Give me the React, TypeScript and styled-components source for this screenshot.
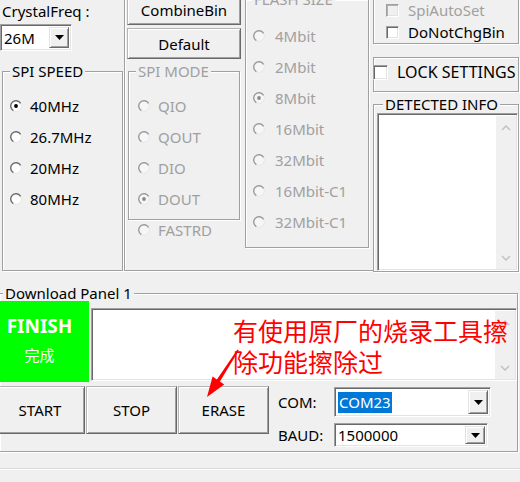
import React from 'react';
import styled, { createGlobalStyle } from 'styled-components';

const GlobalStyle = createGlobalStyle`
  html, body { margin: 0; padding: 0; background: #f0f0f0; }
  body {
    font-family: "Noto Sans", "Noto Sans CJK SC", sans-serif;
    font-size: 15px;
    color: #000;
  }
  * { box-sizing: border-box; }
`;

const DISABLED = '#a0a0a0';

const Window = styled.div`
  position: relative;
  width: 520px;
  height: 482px;
  overflow: hidden;
  display: flex;
  flex-direction: column;
  background: #f0f0f0;
`;

const TopArea = styled.div`
  display: flex;
  align-items: flex-start;
  height: 272px;
  flex-shrink: 0;
`;

const LeftCol = styled.div`
  width: 124px;
  flex-shrink: 0;
  display: flex;
  flex-direction: column;
  align-items: flex-start;
`;

const FieldLabel = styled.div`
  height: 22px;
  line-height: 22px;
  padding-left: 2px;
  white-space: nowrap;
`;

const Group = styled.fieldset<{ $w: number; $h: number; $mt?: number; $ml?: number }>`
  margin: ${p => p.$mt ?? 0}px 0 0 ${p => p.$ml ?? 0}px;
  padding: 0;
  min-width: 0;
  width: ${p => p.$w}px;
  height: ${p => p.$h}px;
  border: 1px solid #a0a0a0;
  box-shadow: 1px 1px 0 #fff, inset 1px 1px 0 #fff;
  flex-shrink: 0;
`;

const Legend = styled.legend<{ $ml: number; $disabled?: boolean }>`
  margin-left: ${p => p.$ml}px;
  padding: 0 2px;
  height: 18px;
  line-height: 18px;
  background: #f0f0f0;
  color: ${p => (p.$disabled ? DISABLED : '#000')};
  white-space: nowrap;
`;

const OptionList = styled.div<{ $pt: number; $pl: number }>`
  display: flex;
  flex-direction: column;
  padding: ${p => p.$pt}px 0 0 ${p => p.$pl}px;
`;

const Option = styled.div<{ $disabled?: boolean; $gap?: number; $h?: number; $ml?: number }>`
  display: flex;
  align-items: center;
  height: ${p => p.$h ?? 31}px;
  gap: ${p => p.$gap ?? 8}px;
  margin-left: ${p => p.$ml ?? 0}px;
  color: ${p => (p.$disabled ? DISABLED : '#000')};
  white-space: nowrap;
`;

const RadioSvg = styled.svg`
  display: block;
  flex-shrink: 0;
`;

function Radio({ checked, disabled }: { checked?: boolean; disabled?: boolean }) {
  return (
    <RadioSvg width="12" height="12" viewBox="0 0 12 12">
      <circle cx="6" cy="6" r="5.4" fill={disabled ? '#f6f6f6' : '#fff'} stroke="#e6e6e6" strokeWidth="1" />
      <path
        d="M10.6 3.35 A5.3 5.3 0 1 0 3.35 10.6"
        fill="none"
        stroke={disabled ? '#9c9c9c' : '#6e6e6e'}
        strokeWidth="1.4"
      />
      {checked && <circle cx="6" cy="6" r="1.9" fill={disabled ? '#8a8a8a' : '#000'} />}
    </RadioSvg>
  );
}

const CheckBox = styled.span<{ $size?: number; $disabled?: boolean; $ml?: number }>`
  display: inline-block;
  flex-shrink: 0;
  width: ${p => p.$size ?? 13}px;
  height: ${p => p.$size ?? 13}px;
  margin-left: ${p => p.$ml ?? 0}px;
  background: ${p => (p.$disabled ? '#f0f0f0' : '#fff')};
  border: 1px solid;
  border-color: #a0a0a0 #fff #fff #a0a0a0;
  box-shadow: inset 1px 1px 0 ${p => (p.$disabled ? '#b0b0b0' : '#696969')}, inset -1px -1px 0 #e3e3e3;
`;

const Btn = styled.button<{ $w: number; $h: number; $ml?: number }>`
  width: ${p => p.$w}px;
  height: ${p => p.$h}px;
  margin: 0 0 0 ${p => p.$ml ?? 0}px;
  padding: 0;
  flex-shrink: 0;
  font: inherit;
  color: #000;
  background: #f0f0f0;
  border: 1px solid;
  border-color: #b4b4b4 #696969 #696969 #b4b4b4;
  box-shadow: inset 1px 1px 0 #fff, inset -1px -1px 0 #a0a0a0;
  display: flex;
  align-items: center;
  justify-content: center;
`;

const ButtonStack = styled.div`
  display: flex;
  flex-direction: column;
  gap: 3px;
  margin-top: -6px;
`;

const Combo = styled.div<{ $w: number; $h: number; $mt?: number }>`
  display: flex;
  width: ${p => p.$w}px;
  height: ${p => p.$h}px;
  margin-top: ${p => p.$mt ?? 0}px;
  background: #fff;
  border: 1px solid;
  border-color: #a0a0a0 #fff #fff #a0a0a0;
  box-shadow: inset 1px 1px 0 #696969, inset -1px -1px 0 #e3e3e3;
  padding: 2px 2px 2px 2px;
  flex-shrink: 0;
`;

const ComboText = styled.div`
  flex: 1;
  display: flex;
  align-items: center;
  padding-left: 1px;
  white-space: nowrap;
`;

const Selected = styled.span`
  background: #0078d7;
  color: #fff;
  line-height: 21px;
  padding: 0 1px;
`;

const DropBtn = styled.div`
  width: 20px;
  align-self: stretch;
  background: #f0f0f0;
  border: 1px solid;
  border-color: #e3e3e3 #696969 #696969 #e3e3e3;
  box-shadow: inset 1px 1px 0 #fff, inset -1px -1px 0 #a0a0a0;
  display: flex;
  align-items: center;
  justify-content: center;
`;

function DropArrow() {
  return (
    <DropBtn>
      <svg width="9" height="5" viewBox="0 0 9 5">
        <polygon points="0,0 9,0 4.5,5" fill="#000" />
      </svg>
    </DropBtn>
  );
}

const MidPanel = styled.div`
  width: 249px;
  height: 271px;
  flex-shrink: 0;
  border-left: 1px solid #a0a0a0;
  border-bottom: 1px solid #a0a0a0;
  box-shadow: inset 1px 0 0 #fff, 0 1px 0 #fff;
  display: flex;
  align-items: flex-start;
`;

const SubCol = styled.div<{ $w: number; $pl: number }>`
  width: ${p => p.$w}px;
  padding-left: ${p => p.$pl}px;
  flex-shrink: 0;
  display: flex;
  flex-direction: column;
  align-items: flex-start;
`;

const RightCol = styled.div`
  width: 146px;
  flex-shrink: 0;
  display: flex;
  flex-direction: column;
  align-items: flex-start;
`;

const PlainBox = styled.div<{ $h: number; $mt: number }>`
  width: 146px;
  height: ${p => p.$h}px;
  margin-top: ${p => p.$mt}px;
  border: 1px solid #a0a0a0;
  box-shadow: 1px 1px 0 #fff, inset 1px 1px 0 #fff;
  flex-shrink: 0;
`;

const CheckList = styled(PlainBox)`
  display: flex;
  flex-direction: column;
  padding: 8px 0 0 12px;
`;

const CheckRow = styled.div<{ $disabled?: boolean }>`
  display: flex;
  align-items: center;
  gap: 9px;
  height: 22px;
  color: ${p => (p.$disabled ? DISABLED : '#000')};
  white-space: nowrap;
`;

const LockBox = styled(PlainBox)`
  display: flex;
  align-items: center;
  gap: 9px;
  padding-bottom: 5px;
  font-size: 16px;
  white-space: nowrap;
`;

const TextBox = styled.div<{ $w: number; $h: number; $ml?: number; $mt?: number }>`
  width: ${p => p.$w}px;
  height: ${p => p.$h}px;
  margin: ${p => p.$mt ?? 0}px 0 0 ${p => p.$ml ?? 0}px;
  flex-shrink: 0;
  background: #fff;
  display: flex;
  justify-content: flex-end;
  border: 1px solid;
  border-color: #a0a0a0 #fff #fff #a0a0a0;
  box-shadow: inset 1px 1px 0 #696969, inset -1px -1px 0 #e3e3e3;
  padding: 2px 1px 1px 2px;
`;

const ScrollTrack = styled.div`
  width: 20px;
  height: 100%;
  background: #f0f0f0;
  display: flex;
  flex-direction: column;
  justify-content: space-between;
  align-items: center;
  padding: 9px 0 8px;
`;

function Chevron({ up }: { up?: boolean }) {
  return (
    <svg width="10" height="6" viewBox="0 0 10 6">
      <polyline
        points={up ? '1,5 5,1 9,5' : '1,1 5,5 9,1'}
        fill="none"
        stroke="#c2c2c2"
        strokeWidth="1.5"
      />
    </svg>
  );
}

const PanelRow = styled.div<{ $mt: number }>`
  display: flex;
  align-items: flex-start;
  margin-top: ${p => p.$mt}px;
`;

const FinishBox = styled.div`
  width: 89px;
  height: 81px;
  flex-shrink: 0;
  background: #00ff00;
  color: #fff;
  display: flex;
  flex-direction: column;
  align-items: center;
  justify-content: flex-start;
  padding: 12px 17px 0 7px;
`;

const FinishTitle = styled.div`
  font-size: 19px;
  font-weight: 700;
  line-height: 26px;
`;

const FinishSub = styled.div`
  font-family: "Noto Sans CJK SC", sans-serif;
  font-size: 15px;
  line-height: 20px;
  margin-top: 6px;
`;

const PortGrid = styled.div`
  display: grid;
  grid-template-columns: 56px auto;
  row-gap: 6px;
  align-items: center;
  margin: 1px 0 0 9px;
`;

const StatusBar = styled.div`
  flex: 1;
  margin-top: 17px;
  border-top: 1px solid #fff;
  box-shadow: 0 -1px 0 #dadada;
`;

const Annotation = styled.div`
  position: absolute;
  left: 233px;
  top: 315px;
  color: #ff0000;
  font-family: "Noto Sans CJK SC", sans-serif;
  font-size: 25px;
  line-height: 31px;
  white-space: nowrap;
`;

const ArrowSvg = styled.svg`
  position: absolute;
  left: 200px;
  top: 340px;
`;

export default function App() {
  return (
    <>
      <GlobalStyle />
      <Window>
        <TopArea>
          <LeftCol>
            <FieldLabel>CrystalFreq :</FieldLabel>
            <Combo $w={72} $h={27} $mt={2}>
              <ComboText>26M</ComboText>
              <DropArrow />
            </Combo>
            <Group $w={121} $h={209} $mt={11} $ml={2}>
              <Legend $ml={7}>SPI SPEED</Legend>
              <OptionList $pt={10} $pl={7}>
                <Option><Radio checked />40MHz</Option>
                <Option><Radio />26.7MHz</Option>
                <Option><Radio />20MHz</Option>
                <Option><Radio />80MHz</Option>
              </OptionList>
            </Group>
          </LeftCol>

          <MidPanel>
            <SubCol $w={118} $pl={2}>
              <ButtonStack>
                <Btn $w={114} $h={31}>CombineBin</Btn>
                <Btn $w={114} $h={31}>Default</Btn>
              </ButtonStack>
              <Group $w={112} $h={158} $mt={3} $ml={1}>
                <Legend $ml={7} $disabled>SPI MODE</Legend>
                <OptionList $pt={10} $pl={9}>
                  <Option $disabled><Radio disabled />QIO</Option>
                  <Option $disabled><Radio disabled />QOUT</Option>
                  <Option $disabled><Radio disabled />DIO</Option>
                  <Option $disabled><Radio disabled checked />DOUT</Option>
                </OptionList>
              </Group>
              <Option $disabled $h={20} $ml={11}><Radio disabled />FASTRD</Option>
            </SubCol>
            <SubCol $w={130} $pl={2}>
              <Group $w={124} $h={258} $mt={-10}>
                <Legend $ml={6} $disabled>FLASH SIZE</Legend>
                <OptionList $pt={12} $pl={7}>
                  <Option $disabled $gap={10}><Radio disabled />4Mbit</Option>
                  <Option $disabled $gap={10}><Radio disabled />2Mbit</Option>
                  <Option $disabled $gap={10}><Radio disabled checked />8Mbit</Option>
                  <Option $disabled $gap={10}><Radio disabled />16Mbit</Option>
                  <Option $disabled $gap={10}><Radio disabled />32Mbit</Option>
                  <Option $disabled $gap={10}><Radio disabled />16Mbit-C1</Option>
                  <Option $disabled $gap={10}><Radio disabled />32Mbit-C1</Option>
                </OptionList>
              </Group>
            </SubCol>
          </MidPanel>

          <RightCol>
            <CheckList $h={54} $mt={-10}>
              <CheckRow $disabled><CheckBox $disabled />SpiAutoSet</CheckRow>
              <CheckRow><CheckBox />DoNotChgBin</CheckRow>
            </CheckList>
            <LockBox $h={35} $mt={13}>
              <CheckBox $size={15} $ml={-1} />
              LOCK SETTINGS
            </LockBox>
            <Group $w={146} $h={177} $mt={3}>
              <Legend $ml={9}>DETECTED INFO</Legend>
              <TextBox $w={141} $h={158} $ml={3}>
                <ScrollTrack>
                  <Chevron up />
                  <Chevron />
                </ScrollTrack>
              </TextBox>
            </Group>
          </RightCol>
        </TopArea>

        <Group $w={519} $h={168} $mt={12} $ml={-1}>
          <Legend $ml={3}>Download Panel 1</Legend>
          <PanelRow $mt={-1}>
            <FinishBox>
              <FinishTitle>FINISH</FinishTitle>
              <FinishSub>完成</FinishSub>
            </FinishBox>
            <TextBox $w={426} $h={73} $ml={2} $mt={7}>
              <ScrollTrack>
                <Chevron up />
                <Chevron />
              </ScrollTrack>
            </TextBox>
          </PanelRow>
          <PanelRow $mt={4}>
            <Btn $w={90} $h={48} $ml={-5}>START</Btn>
            <Btn $w={91} $h={48} $ml={1}>STOP</Btn>
            <Btn $w={91} $h={48} $ml={1}>ERASE</Btn>
            <PortGrid>
              <span>COM:</span>
              <Combo $w={157} $h={30}>
                <ComboText><Selected>COM23</Selected></ComboText>
                <DropArrow />
              </Combo>
              <span>BAUD:</span>
              <Combo $w={154} $h={24}>
                <ComboText>1500000</ComboText>
                <DropArrow />
              </Combo>
            </PortGrid>
          </PanelRow>
        </Group>

        <StatusBar />

        <Annotation>
          有使用原厂的烧录工具擦
          <br />
          除功能擦除过
        </Annotation>
        <ArrowSvg width="45" height="62" viewBox="0 0 45 62">
          <polygon
            points="38.8,10.4 19.9,41.5 24.2,44.5 7,57 12.6,36.5 16.9,39.5 37.4,9.6"
            fill="#ff0000"
          />
        </ArrowSvg>
      </Window>
    </>
  );
}
